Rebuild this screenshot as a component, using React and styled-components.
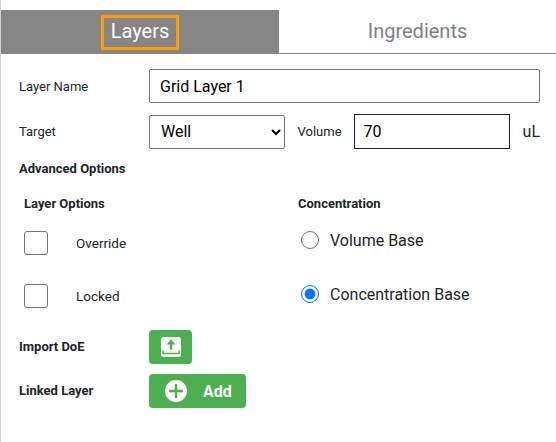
import React from "react";
import styled, { createGlobalStyle } from "styled-components";

const Global = createGlobalStyle`
  html, body { margin: 0; padding: 0; background: #fff; }
  body { font-family: Roboto, "Liberation Sans", sans-serif; color: #212529; }
`;

const Page = styled.div`
  width: 556px;
  height: 442px;
  box-sizing: border-box;
  border-left: 1px solid #d4d4d4;
  padding-top: 10px;
  overflow: hidden;
`;

const Tabs = styled.div`
  display: flex;
  height: 44px;
  box-sizing: border-box;
  border-bottom: 1px solid #858585;
`;

const Tab = styled.div`
  width: ${(p) => p.$w}px;
  display: flex;
  align-items: center;
  justify-content: center;
  padding-bottom: ${(p) => (p.$active ? 0 : 1)}px;
  box-sizing: border-box;
  font-size: 20px;
  background: ${(p) => (p.$active ? "#858585" : "#fff")};
  color: ${(p) => (p.$active ? "#fff" : "#7d8288")};
`;

const Focus = styled.span`
  border: 3px solid #ff9a00;
  padding: 0 7px 2px;
  margin-top: 2px;
  line-height: 27px;
`;

const Form = styled.div`
  padding: 15px 16px 0 18px;
  display: flex;
  flex-direction: column;
`;

const Row = styled.div`
  display: flex;
  align-items: center;
  height: ${(p) => p.$h}px;
  margin-bottom: ${(p) => p.$mb || 0}px;
`;

const Label = styled.label`
  width: 130px;
  flex: none;
  font-size: 13px;
  font-weight: ${(p) => (p.$bold ? 700 : 400)};
  padding-bottom: ${(p) => (p.$bold ? 2 : 0)}px;
`;

const TextInput = styled.input`
  box-sizing: border-box;
  width: 391px;
  height: 34px;
  border: 1px solid #767676;
  border-radius: 2px;
  padding: 0 10px;
  font: 16px Roboto, sans-serif;
  color: #000;
  outline: none;
`;

const Select = styled.select`
  box-sizing: border-box;
  width: 136px;
  height: 34px;
  border: 1px solid #767676;
  border-radius: 2px;
  padding: 0 7px;
  font: 16px Roboto, sans-serif;
  color: #000;
  background: #fff;
`;

const VolumeLabel = styled.label`
  font-size: 13px;
  margin: 0 12px 0 13px;
`;

const VolumeInput = styled.input`
  box-sizing: border-box;
  width: 156px;
  height: 35px;
  border: 1px solid #222;
  padding: 0 9px;
  font: 16px Roboto, sans-serif;
  color: #000;
  outline: none;
`;

const Unit = styled.span`
  font-size: 16px;
  margin-left: 13px;
`;

const Heading = styled.div`
  font-size: 13px;
  font-weight: 700;
  line-height: 16px;
`;

const Columns = styled.div`
  display: grid;
  grid-template-columns: 274px 1fr;
  margin-top: 19px;
  padding-left: 5px;
`;

const Column = styled.div`
  display: flex;
  flex-direction: column;
`;

const CheckRow = styled.label`
  display: flex;
  align-items: center;
  height: 24px;
  margin-top: ${(p) => p.$mt}px;
  font-size: 13.5px;
`;

const Box = styled.input.attrs({ type: "checkbox" })`
  appearance: none;
  box-sizing: border-box;
  width: 24px;
  height: 24px;
  margin: 0 28px 0 0;
  border: 1px solid #767676;
  border-radius: 3px;
  background: #fff;
`;

const RadioRow = styled.label`
  display: flex;
  align-items: center;
  height: 18px;
  margin-top: ${(p) => p.$mt}px;
  padding-left: 3px;
  font-size: 16px;
`;

const Radio = styled.input.attrs({ type: "radio" })`
  width: 18px;
  height: 18px;
  margin: 0 11px 0 0;
  accent-color: #0075ff;
`;

const ActionRow = styled.div`
  display: flex;
  align-items: center;
  height: 34px;
  margin-top: ${(p) => p.$mt}px;
`;

const GreenButton = styled.button`
  box-sizing: border-box;
  width: ${(p) => p.$w}px;
  height: 34px;
  padding: 0 0 0 ${(p) => (p.$w > 50 ? 2 : 0)}px;
  border: none;
  border-radius: 4px;
  background: #4caf50;
  color: #fff;
  font: 700 16px Roboto, sans-serif;
  display: flex;
  align-items: center;
  justify-content: center;
  gap: 16px;
`;

const UploadIcon = () => (
  <svg width="20" height="20" viewBox="0 0 20 20">
    <rect x="0" y="0" width="20" height="20" rx="2.5" fill="#fff" />
    <path d="M10 2.5 L14.5 7.5 H11.2 V12.5 H8.8 V7.5 H5.5 Z" fill="#4caf50" />
    <path d="M2 13.5 V16.5 H18 V13.5" fill="none" stroke="#4caf50" strokeWidth="1.5" />
  </svg>
);

const PlusIcon = () => (
  <svg width="22" height="22" viewBox="0 0 22 22">
    <circle cx="11" cy="11" r="11" fill="#fff" />
    <path d="M11 4 V18 M4 11 H18" stroke="#4caf50" strokeWidth="2.4" />
  </svg>
);

export default function App() {
  return (
    <Page>
      <Global />
      <Tabs>
        <Tab $active $w={278}>
          <Focus>Layers</Focus>
        </Tab>
        <Tab $w={277}>Ingredients</Tab>
      </Tabs>
      <Form>
        <Row $h={34} $mb={11}>
          <Label>Layer Name</Label>
          <TextInput defaultValue="Grid Layer 1" />
        </Row>
        <Row $h={35} $mb={12}>
          <Label>Target</Label>
          <Select defaultValue="Well">
            <option>Well</option>
          </Select>
          <VolumeLabel>Volume</VolumeLabel>
          <VolumeInput defaultValue="70" />
          <Unit>uL</Unit>
        </Row>
        <Heading>Advanced Options</Heading>
        <Columns>
          <Column>
            <Heading>Layer Options</Heading>
            <CheckRow $mt={19}>
              <Box />
              Override
            </CheckRow>
            <CheckRow $mt={29}>
              <Box />
              Locked
            </CheckRow>
          </Column>
          <Column>
            <Heading>Concentration</Heading>
            <RadioRow $mt={19}>
              <Radio name="base" />
              Volume Base
            </RadioRow>
            <RadioRow $mt={36}>
              <Radio name="base" defaultChecked />
              Concentration Base
            </RadioRow>
          </Column>
        </Columns>
        <ActionRow $mt={22}>
          <Label $bold>Import DoE</Label>
          <GreenButton $w={43} aria-label="Import DoE">
            <UploadIcon />
          </GreenButton>
        </ActionRow>
        <ActionRow $mt={10}>
          <Label $bold>Linked Layer</Label>
          <GreenButton $w={97}>
            <PlusIcon />
            Add
          </GreenButton>
        </ActionRow>
      </Form>
    </Page>
  );
}
